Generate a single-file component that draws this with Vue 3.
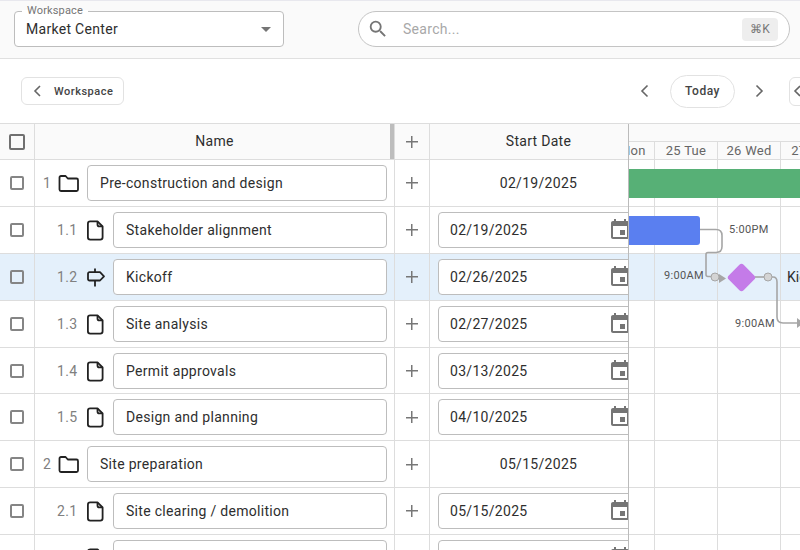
<template>
  <div class="page">
    <header class="topbar">
      <div class="select">
        <span class="select-label">Workspace</span>
        <span class="select-value">Market Center</span>
        <span class="caret"></span>
      </div>
      <div class="search">
        <svg class="search-icon" viewBox="0 0 24 24" width="22" height="22">
          <path d="M15.5 14h-.79l-.28-.27A6.47 6.47 0 0 0 16 9.5 6.5 6.5 0 1 0 9.5 16c1.61 0 3.09-.59 4.23-1.57l.27.28v.79l5 4.99L20.49 19l-4.99-5zm-6 0C7.01 14 5 11.99 5 9.5S7.01 5 9.5 5 14 7.01 14 9.5 11.99 14 9.5 14z" />
        </svg>
        <span class="search-text">Search...</span>
        <span class="kbd">⌘K</span>
      </div>
    </header>

    <div class="toolbar">
      <button class="back-btn">
        <svg viewBox="0 0 16 16" width="16" height="16"><path class="chev" d="M10 3 5 8l5 5" /></svg>
        <span>Workspace</span>
      </button>
      <div class="nav">
        <svg viewBox="0 0 16 16" width="16" height="16"><path class="chev" d="M10.500 2.500 5 8l5.500 5.500" /></svg>
        <button class="today-btn">Today</button>
        <svg viewBox="0 0 16 16" width="16" height="16"><path class="chev" d="M5.500 2.500 11 8l-5.500 5.500" /></svg>
        <button class="cut-btn">
          <svg viewBox="0 0 16 16" width="16" height="16"><path class="chev" d="M10 3 5 8l5 5" /></svg>
        </button>
      </div>
    </div>

    <div class="board">
      <div class="table">
        <div class="row head">
          <div class="cell check"><span class="box big"></span></div>
          <div class="cell name-head"><span class="head-text">Name</span><span class="resizer"></span></div>
          <div class="cell add"><span class="plus"></span></div>
          <div class="cell date-head"><span class="head-text">Start Date</span></div>
        </div>
        <div v-for="task in tasks" :key="task.no" class="row" :class="{ active: task.active }">
          <div class="cell check"><span class="box"></span></div>
          <div class="cell name" :class="{ child: task.type !== 'folder' }">
            <span class="no">{{ task.no }}</span>
            <svg v-if="task.type === 'folder'" class="type-icon" viewBox="0 0 24 24" width="24" height="24">
              <path d="M3.500 18.500V6.500A1.500 1.500 0 0 1 5 5h4.600l2.200 2.500h8.700a1.500 1.500 0 0 1 1.500 1.500v9.500a1.500 1.500 0 0 1-1.500 1.500H5a1.500 1.500 0 0 1-1.500-1.500z" />
            </svg>
            <svg v-else-if="task.type === 'file'" class="type-icon" viewBox="0 0 24 24" width="24" height="24">
              <path d="M6.200 3.400h7.300l5.100 5.100v10.800a2.300 2.300 0 0 1-2.300 2.300H6.200a2.300 2.300 0 0 1-2.300-2.300V5.700a2.300 2.300 0 0 1 2.300-2.300z" />
              <path d="M13.500 3.400v3a2 2 0 0 0 2 2h3" />
            </svg>
            <svg v-else class="type-icon" viewBox="0 0 24 24" width="24" height="24">
              <path d="M11 3.500v3.700M11 15.500v6M5.500 7.200H16l4 4.100-4 4.200H5.500a1.500 1.500 0 0 1-1.500-1.500V8.700a1.500 1.500 0 0 1 1.500-1.500z" />
            </svg>
            <div class="field">{{ task.name }}</div>
          </div>
          <div class="cell add"><span class="plus"></span></div>
          <div class="cell date">
            <span v-if="task.type === 'folder'">{{ task.date }}</span>
            <div v-else class="field date-field">
              {{ task.date }}
              <svg class="cal" viewBox="0 0 24 24" width="24" height="24">
                <path d="M17 12h-5v5h5v-5zM16 1v2H8V1H6v2H5c-1.110 0-1.990.9-1.990 2L3 19c0 1.100.89 2 2 2h14c1.100 0 2-.9 2-2V5c0-1.100-.9-2-2-2h-1V1h-2zm3 18H5V8h14v11z" />
              </svg>
            </div>
          </div>
        </div>
      </div>

      <div class="chart">
        <div class="chart-top"></div>
        <div class="days">
          <div v-for="d in days" :key="d" class="day">{{ d }}</div>
        </div>
        <div class="canvas">
          <div v-for="task in tasks" :key="task.no" class="chart-row" :class="{ active: task.active }">
            <span v-for="n in 4" :key="n" class="slot"></span>
          </div>
          <div class="gbar green"></div>
          <div class="gbar blue"></div>
          <div class="diamond"></div>
          <span class="time t1">5:00PM</span>
          <span class="time t2">9:00AM</span>
          <span class="time t3">9:00AM</span>
          <span class="kick">Kickoff</span>
          <svg class="links" width="171" height="200" viewBox="0 0 171 200">
            <path d="M71 69.500h16q6 0 6 6v11q0 6-6 6h-8q-2 0-2 2v20q0 2 2 2h4" />
            <path d="M126 117h13" />
            <path d="M143 117h1q4 0 4 5v35q0 6 6 6h14" />
            <circle cx="86" cy="117" r="4" />
            <circle cx="139" cy="117" r="4" />
            <polygon class="arrow" points="90,114 97,118.500 90,123" />
            <polygon class="arrow" points="168,158 175,163 168,168" />
          </svg>
        </div>
      </div>
    </div>
  </div>
</template>

<script setup>
const days = ['24 Mon', '25 Tue', '26 Wed', '27 Thu']

const tasks = [
  { no: '1', type: 'folder', name: 'Pre-construction and design', date: '02/19/2025' },
  { no: '1.1', type: 'file', name: 'Stakeholder alignment', date: '02/19/2025' },
  { no: '1.2', type: 'milestone', name: 'Kickoff', date: '02/26/2025', active: true },
  { no: '1.3', type: 'file', name: 'Site analysis', date: '02/27/2025' },
  { no: '1.4', type: 'file', name: 'Permit approvals', date: '03/13/2025' },
  { no: '1.5', type: 'file', name: 'Design and planning', date: '04/10/2025' },
  { no: '2', type: 'folder', name: 'Site preparation', date: '05/15/2025' },
  { no: '2.1', type: 'file', name: 'Site clearing / demolition', date: '05/15/2025' },
  { no: '2.2', type: 'file', name: '', date: '' }
]
</script>

<style>
html,
body {
  margin: 0;
  background: #fff;
}
</style>

<style scoped>
.page {
  width: 800px;
  height: 550px;
  overflow: hidden;
  font-family: Roboto, "Liberation Sans", sans-serif;
  color: #2e2e2e;
  background: #fff;
}

.topbar {
  height: 59px;
  box-sizing: border-box;
  border-top: 1px solid #e8e8ee;
  border-bottom: 1px solid #e0e0e0;
  background: #fafafa;
  padding: 10px 10px 0 14px;
  display: flex;
  gap: 74px;
  align-items: flex-start;
}

.select {
  position: relative;
  width: 270px;
  height: 36px;
  box-sizing: border-box;
  border: 1px solid #bdbdbd;
  border-radius: 4px;
  background: #fff;
  display: flex;
  align-items: center;
  padding-left: 11px;
  font-size: 14px;
  letter-spacing: 0.3px;
}

.select-label {
  position: absolute;
  left: 7px;
  top: -8px;
  padding: 0 5px;
  font-size: 11px;
  line-height: 13px;
  letter-spacing: 0.15px;
  color: #757575;
  background: linear-gradient(#fafafa 50%, #fff 50%);
}

.caret {
  position: absolute;
  right: 12px;
  top: 15px;
  border-left: 5px solid transparent;
  border-right: 5px solid transparent;
  border-top: 5px solid #757575;
}

.search {
  width: 432px;
  height: 36px;
  box-sizing: border-box;
  border: 1px solid #c4c4c4;
  border-radius: 18px;
  background: #fff;
  display: flex;
  align-items: center;
  padding: 0 11px 0 8px;
}

.search-icon {
  fill: #757575;
  flex: none;
}

.search-text {
  margin-left: 14px;
  flex: 1;
  font-size: 14px;
  letter-spacing: 0.3px;
  color: #a8a8a8;
}

.kbd {
  width: 36px;
  height: 23px;
  border-radius: 4px;
  background: #eee;
  color: #777;
  font-size: 12px;
  display: flex;
  align-items: center;
  justify-content: center;
  letter-spacing: 0.3px;
}

.toolbar {
  height: 64px;
  box-sizing: border-box;
  padding-left: 21px;
  display: flex;
  align-items: center;
  justify-content: space-between;
}

.chev {
  fill: none;
  stroke: #666;
  stroke-width: 1.6;
}

button {
  font-family: inherit;
  background: #fff;
  padding: 0;
  color: #444;
}

.back-btn {
  width: 103px;
  height: 28px;
  border: 1px solid #e2e2e2;
  border-radius: 6px;
  display: flex;
  align-items: center;
  gap: 8px;
  padding-left: 8px;
  font-size: 11px;
  font-weight: 500;
  letter-spacing: 0.5px;
}

.nav {
  display: flex;
  align-items: center;
  flex: none;
  margin-right: -19px;
}

.nav svg {
  flex: none;
}

.nav > svg:first-child {
  margin-right: 17px;
}

.today-btn {
  flex: none;
  width: 65px;
  height: 33px;
  border: 1px solid #e2e2e2;
  border-radius: 17px;
  font-size: 12px;
  font-weight: 500;
  letter-spacing: 0.5px;
}

.today-btn + svg {
  margin-left: 16px;
}

.cut-btn {
  flex: none;
  width: 30px;
  height: 29px;
  margin-left: 22px;
  border: 1px solid #e2e2e2;
  border-radius: 6px;
  display: flex;
  align-items: center;
}

.board {
  display: flex;
  border-top: 1px solid #ddd;
}

.table {
  width: 628px;
  flex: none;
  border-right: 1.5px solid #bbb;
  overflow: hidden;
}

.row {
  display: grid;
  grid-template-columns: 35px 360px 35px 217px;
  height: 46.9px;
  box-sizing: border-box;
  border-bottom: 1px solid #ddd;
}

.row.head {
  height: 36px;
  background: #fafafa;
  font-size: 14px;
  letter-spacing: 0.3px;
}

.head-text {
  margin-bottom: 2px;
}

.row.active {
  background: #e4f0fb;
}

.cell {
  box-sizing: border-box;
  border-right: 1px solid #ddd;
  display: flex;
  align-items: center;
  min-width: 0;
}

.cell:last-child {
  border-right: 0;
}

.check,
.add,
.date-head,
.name-head {
  justify-content: center;
}

.box {
  width: 10px;
  height: 10px;
  border: 2px solid #858585;
  border-radius: 2px;
}

.box.big {
  width: 12px;
  height: 12px;
  border-color: #707070;
}

.name-head {
  position: relative;
}

.resizer {
  position: absolute;
  right: 0;
  top: 0;
  bottom: 0;
  width: 4px;
  background: #bdbdbd;
}

.plus {
  position: relative;
  width: 12px;
  height: 12px;
  background:
    linear-gradient(#777, #777) center / 100% 1.5px no-repeat,
    linear-gradient(#777, #777) center / 1.5px 100% no-repeat;
}

.name {
  padding: 0 7px 0 8px;
}

.no {
  width: 7px;
  font-size: 14px;
  color: #808080;
  letter-spacing: 0.3px;
}

.name.child .no {
  width: 20px;
  margin-left: 14px;
}

.type-icon {
  flex: none;
  margin: 0 7px 0 6px;
  fill: none;
  stroke: #222;
  stroke-width: 1.8;
  stroke-linejoin: round;
}

.name.child .type-icon {
  margin: 0 5px 0 7px;
}

.field {
  flex: 1;
  height: 36px;
  box-sizing: border-box;
  border: 1px solid #bdbdbd;
  border-radius: 4px;
  background: #fff;
  display: flex;
  align-items: center;
  padding-left: 12px;
  font-size: 14px;
  letter-spacing: 0.3px;
  white-space: nowrap;
  min-width: 0;
}

.date {
  justify-content: center;
  font-size: 14px;
  letter-spacing: 0.3px;
}

.date:has(.date-field) {
  padding-left: 8px;
  justify-content: flex-start;
}

.date-field {
  position: relative;
  flex: none;
  width: 200px;
  padding-left: 11px;
}

.cal {
  position: absolute;
  right: 5px;
  top: 5px;
  fill: #757575;
}

.chart {
  flex: 1;
  min-width: 0;
  overflow: hidden;
}

.chart-top {
  height: 17px;
  background: #fafafa;
}

.days {
  display: flex;
  height: 19px;
  box-sizing: border-box;
  border-top: 1px solid #ddd;
  border-bottom: 1px solid #ddd;
  margin-left: -37px;
  background: #fafafa;
}

.day {
  flex: none;
  width: 63px;
  box-sizing: border-box;
  border-right: 1px solid #ddd;
  font-size: 13px;
  line-height: 17px;
  letter-spacing: 0.3px;
  text-align: center;
  color: #666;
  white-space: nowrap;
}

.canvas {
  position: relative;
  height: 420px;
}

.chart-row {
  display: flex;
  height: 46.9px;
  box-sizing: border-box;
  border-bottom: 1px solid #ddd;
  margin-left: -37px;
}

.chart-row.active {
  background: #e4f0fb;
}

.slot {
  flex: none;
  width: 63px;
  box-sizing: border-box;
  border-right: 1px solid #ddd;
}

.gbar {
  position: absolute;
  left: 0;
  height: 29px;
}

.green {
  top: 9px;
  right: 0;
  background: #57b076;
}

.blue {
  top: 56px;
  width: 71px;
  background: #5a7ff0;
  border-radius: 0 3px 3px 0;
}

.diamond {
  position: absolute;
  left: 102px;
  top: 107px;
  width: 21px;
  height: 21px;
  background: #c47be8;
  border-radius: 3px;
  transform: rotate(45deg);
}

.time {
  position: absolute;
  font-size: 11px;
  line-height: 13px;
  letter-spacing: 0.3px;
  color: #555;
}

.t1 {
  left: 100px;
  top: 63px;
}

.t2 {
  left: 35px;
  top: 109px;
}

.t3 {
  left: 106px;
  top: 157px;
}

.kick {
  position: absolute;
  left: 158px;
  top: 109px;
  font-size: 14px;
  line-height: 16px;
  white-space: nowrap;
}

.links {
  position: absolute;
  left: 0;
  top: 0;
}

.links path {
  fill: none;
  stroke: #a6a6a6;
  stroke-width: 1.6;
}

.links circle {
  fill: #d4d4d4;
  stroke: #a6a6a6;
  stroke-width: 1;
}

.links .arrow {
  fill: #a6a6a6;
}
</style>
